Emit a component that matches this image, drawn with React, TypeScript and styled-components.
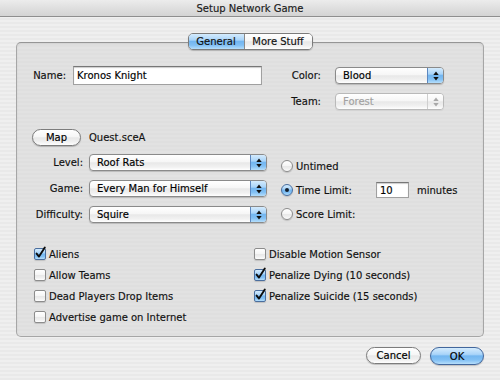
import React from "react";
import styled, {createGlobalStyle, css} from "styled-components";

const GlobalStyle = createGlobalStyle`
    html, body {
        margin: 0;
        padding: 0;
    }

    body {
        font-family: "DejaVu Sans", "Liberation Sans", sans-serif;
        font-size: 10px;
        color: #111;
        -webkit-text-stroke: 0.15px currentColor;
    }
`

type PopupProps = {
    value: string
    width: number
    disabled?: boolean
}

const Arrows = ({color}: { color: string }) => (
    <svg width="6" height="10" viewBox="0 0 6 10">
        <polygon points="0.3,4 3,0.6 5.7,4" fill={color}/>
        <polygon points="0.3,6 3,9.4 5.7,6" fill={color}/>
    </svg>
)

const Popup = ({value, width, disabled}: PopupProps) => (
    <PopupBox $w={width} $disabled={disabled}>
        <PopupText>{value}</PopupText>
        <PopupArrows $disabled={disabled}>
            <Arrows color={disabled ? "#a8a8a8" : "#111"}/>
        </PopupArrows>
    </PopupBox>
)

const Check = ({label, checked}: { label: string, checked?: boolean }) => (
    <CheckRow>
        <CheckBox $checked={checked}>
            {checked && (
                <CheckMark width="13" height="13" viewBox="0 0 13 13">
                    <path d="M2.6 7.6 L5 10.6 L10.8 1.6" fill="none" stroke="#0c0c0c" strokeWidth="1.9"
                          strokeLinecap="round" strokeLinejoin="round"/>
                </CheckMark>
            )}
        </CheckBox>
        <span>{label}</span>
    </CheckRow>
)

export default function App() {
    return (
        <>
            <GlobalStyle/>
            <Window>
                <TitleBar>Setup Network Game</TitleBar>
                <Content>
                    <TabRow>
                        <Segmented>
                            <Segment $active $w={55}>General</Segment>
                            <Segment $w={67}>More Stuff</Segment>
                        </Segmented>
                    </TabRow>
                    <TabBox>
                        <TopSection>
                            <Label $w={34}>Name:</Label>
                            <NameInput readOnly defaultValue="Kronos Knight"/>
                            <SideGrid>
                                <Label $w={45}>Color:</Label>
                                <Popup value="Blood" width={109}/>
                                <Label $w={45}>Team:</Label>
                                <Popup value="Forest" width={109} disabled/>
                            </SideGrid>
                        </TopSection>

                        <MiddleSection>
                            <LeftColumn>
                                <MapRow>
                                    <PillButton $w={49}>Map</PillButton>
                                    <span>Quest.sceA</span>
                                </MapRow>
                                <LevelGrid>
                                    <Label $w={51}>Level:</Label>
                                    <Popup value="Roof Rats" width={178}/>
                                    <Label $w={51}>Game:</Label>
                                    <Popup value="Every Man for Himself" width={178}/>
                                    <Label $w={51}>Difficulty:</Label>
                                    <Popup value="Squire" width={178}/>
                                </LevelGrid>
                            </LeftColumn>
                            <RadioGroup>
                                <RadioRow>
                                    <Radio/>
                                    <span>Untimed</span>
                                </RadioRow>
                                <RadioRow>
                                    <Radio $checked/>
                                    <RadioLabel $w={77}>Time Limit:</RadioLabel>
                                    <SmallInput readOnly defaultValue="10"/>
                                    <Unit>minutes</Unit>
                                </RadioRow>
                                <RadioRow>
                                    <Radio/>
                                    <span>Score Limit:</span>
                                </RadioRow>
                            </RadioGroup>
                        </MiddleSection>

                        <OptionsSection>
                            <OptionColumn $w={220}>
                                <Check label="Aliens" checked/>
                                <Check label="Allow Teams"/>
                                <Check label="Dead Players Drop Items"/>
                                <Check label="Advertise game on Internet"/>
                            </OptionColumn>
                            <OptionColumn>
                                <Check label="Disable Motion Sensor"/>
                                <Check label="Penalize Dying (10 seconds)" checked/>
                                <Check label="Penalize Suicide (15 seconds)" checked/>
                            </OptionColumn>
                        </OptionsSection>
                    </TabBox>
                    <Footer>
                        <PillButton $w={55}>Cancel</PillButton>
                        <PillButton $w={54} $primary>OK</PillButton>
                    </Footer>
                </Content>
            </Window>
        </>
    );
}

const aquaBlue = css`
    background: linear-gradient(#d4ebfd 0%, #a9d4f9 40%, #73b6f0 50%, #82c0f4 75%, #b5defb 100%);
`

const aquaWhite = css`
    background: linear-gradient(#ffffff 0%, #f6f6f6 45%, #e8e8e8 52%, #f1f1f1 80%, #ffffff 100%);
`

const Window = styled.div`
    width: 500px;
    height: 380px;
    overflow: hidden;
    display: flex;
    flex-direction: column;
    background: repeating-linear-gradient(to bottom, #efefef 0 2px, #e9e9e9 2px 4px);
`

const TitleBar = styled.div`
    height: 16px;
    border-bottom: 1px solid #8e8e8e;
    background: linear-gradient(#ececec, #d3d3d3);
    display: flex;
    align-items: center;
    justify-content: center;
    color: #1a1a1a;
`

const Content = styled.div`
    display: flex;
    flex-direction: column;
    padding: 16px 16px 0 16px;
`

const TabRow = styled.div`
    display: flex;
    justify-content: center;
    height: 17px;
    margin-bottom: -8px;
    position: relative;
    z-index: 1;
`

const Segmented = styled.div`
    display: flex;
    border: 1px solid #7b7b7b;
    border-radius: 5px;
    overflow: hidden;
    box-shadow: 0 1px 1px rgba(0, 0, 0, 0.2);
    height: 15px;
`

const Segment = styled.div<{ $active?: boolean, $w: number }>`
    width: ${p => p.$w}px;
    display: flex;
    align-items: center;
    justify-content: center;
    ${p => p.$active ? aquaBlue : aquaWhite};

    & + & {
        border-left: 1px solid #8a8a8a;
    }
`

const TabBox = styled.div`
    height: 295px;
    box-sizing: border-box;
    border: 1px solid #a6a6a6;
    border-top-color: #959595;
    border-radius: 5px;
    background: repeating-linear-gradient(to bottom, #e2e2e2 0 2px, #dfdfdf 2px 4px);
    box-shadow: inset 0 1px 2px rgba(0, 0, 0, 0.08);
    padding: 23px 0 0 15px;
    display: flex;
    flex-direction: column;
`

const Label = styled.div<{ $w: number }>`
    width: ${p => p.$w}px;
    text-align: right;
    white-space: nowrap;
`

const TopSection = styled.div`
    display: flex;
    align-items: flex-start;

    & > ${Label} {
        line-height: 19px;
        margin-right: 7px;
    }
`

const NameInput = styled.input`
    width: 189px;
    height: 19px;
    box-sizing: border-box;
    border: 1px solid #a0a0a0;
    border-top-color: #777;
    box-shadow: inset 0 1px 1px rgba(0, 0, 0, 0.2);
    background: #fff;
    padding: 0 3px;
    margin: 0;
    font: inherit;
    color: #000;
    outline: none;
`

const SideGrid = styled.div`
    display: grid;
    grid-template-columns: 45px 109px;
    column-gap: 14px;
    row-gap: 9px;
    align-items: center;
    margin: 1px 0 0 14px;
`

const PopupBox = styled.div<{ $w: number, $disabled?: boolean }>`
    width: ${p => p.$w}px;
    height: 17px;
    box-sizing: border-box;
    display: flex;
    border: 1px solid ${p => p.$disabled ? "#b9b9b9" : "#8a8a8a"};
    border-radius: 4px;
    overflow: hidden;
    ${aquaWhite};
    box-shadow: 0 1px 1px rgba(0, 0, 0, ${p => p.$disabled ? 0.06 : 0.18});
    color: ${p => p.$disabled ? "#a2a2a2" : "#000"};
`

const PopupText = styled.div`
    flex: 1;
    padding-left: 7px;
    display: flex;
    align-items: center;
    white-space: nowrap;
`

const PopupArrows = styled.div<{ $disabled?: boolean }>`
    width: 15px;
    display: flex;
    align-items: center;
    justify-content: center;
    border-left: 1px solid ${p => p.$disabled ? "#cfcfcf" : "#5c87bf"};
    ${p => p.$disabled ? aquaWhite : aquaBlue};
`

const MiddleSection = styled.div`
    display: flex;
    align-items: flex-start;
    margin-top: 19px;
`

const LeftColumn = styled.div`
    display: flex;
    flex-direction: column;
    gap: 8px;
`

const MapRow = styled.div`
    display: flex;
    align-items: center;
    gap: 8px;
`

const PillButton = styled.div<{ $w: number, $primary?: boolean }>`
    width: ${p => p.$w}px;
    height: ${p => p.$primary ? 18 : 17}px;
    box-sizing: border-box;
    border-radius: 9px;
    display: flex;
    align-items: center;
    justify-content: center;
    border: 1px solid ${p => p.$primary ? "#41669c" : "#7c7c7c"};
    box-shadow: 0 1px 1px rgba(0, 0, 0, 0.2);
    ${p => p.$primary ? aquaBlue : aquaWhite};
    color: #000;
`

const LevelGrid = styled.div`
    display: grid;
    grid-template-columns: 51px 178px;
    column-gap: 6px;
    row-gap: 9px;
    align-items: center;
`

const RadioGroup = styled.div`
    display: flex;
    flex-direction: column;
    gap: 6px;
    margin: 28px 0 0 14px;
`

const RadioRow = styled.div`
    height: 18px;
    display: flex;
    align-items: center;
    gap: 3px;
`

const Radio = styled.div<{ $checked?: boolean }>`
    width: 12px;
    height: 12px;
    box-sizing: border-box;
    border-radius: 50%;
    border: 1px solid ${p => p.$checked ? "#4a6e9e" : "#8c8c8c"};
    ${p => p.$checked ? aquaBlue : aquaWhite};
    box-shadow: 0 1px 1px rgba(0, 0, 0, 0.15);
    display: flex;
    align-items: center;
    justify-content: center;

    &::after {
        content: "";
        display: ${p => p.$checked ? "block" : "none"};
        width: 4px;
        height: 4px;
        border-radius: 50%;
        background: #15202e;
    }
`

const RadioLabel = styled.span<{ $w: number }>`
    width: ${p => p.$w}px;
`

const SmallInput = styled.input`
    width: 33px;
    height: 16px;
    box-sizing: border-box;
    border: 1px solid #a0a0a0;
    border-top-color: #777;
    box-shadow: inset 0 1px 1px rgba(0, 0, 0, 0.2);
    background: #fff;
    padding: 0 3px;
    margin: 0;
    font: inherit;
    color: #000;
    outline: none;
`

const Unit = styled.span`
    margin-left: 5px;
`

const OptionsSection = styled.div`
    display: flex;
    margin: 24px 0 0 2px;
`

const OptionColumn = styled.div<{ $w?: number }>`
    ${p => p.$w ? `width: ${p.$w}px;` : ""}
    display: flex;
    flex-direction: column;
    gap: 7px;
`

const CheckRow = styled.div`
    height: 14px;
    display: flex;
    align-items: center;
    gap: 3px;
    white-space: nowrap;
`

const CheckBox = styled.div<{ $checked?: boolean }>`
    width: 12px;
    height: 12px;
    box-sizing: border-box;
    border-radius: 2px;
    border: 1px solid ${p => p.$checked ? "#4a6e9e" : "#8c8c8c"};
    ${p => p.$checked ? aquaBlue : aquaWhite};
    box-shadow: 0 1px 1px rgba(0, 0, 0, 0.15);
    position: relative;
`

const CheckMark = styled.svg`
    position: absolute;
    left: -1px;
    top: -3px;
`

const Footer = styled.div`
    display: flex;
    justify-content: flex-end;
    gap: 9px;
    margin-top: 10px;
`
